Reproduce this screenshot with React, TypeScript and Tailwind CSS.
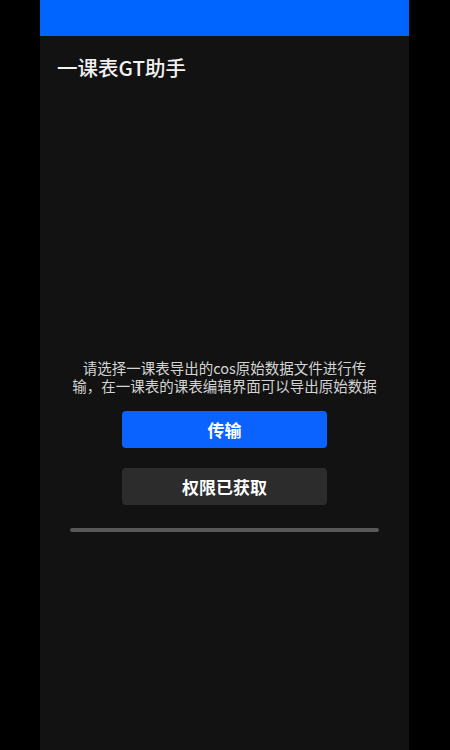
export default function App() {
  return (
    <div className="flex h-[750px] w-[450px] bg-black font-['Noto_Sans_CJK_SC','Noto_Sans',sans-serif]">
      <div className="ml-[40px] flex h-full w-[369px] flex-col bg-[#121212]">
        <div className="h-[36px] w-full bg-[#0064ff]" />
        <h1 className="pl-[17px] pt-[17px] text-[20.5px] font-medium leading-[28px] text-[#f2f2f2]">
          一课表GT助手
        </h1>

        <p className="mt-[278px] text-center text-[14.5px] leading-[18px] text-[#d4d4d4]">
          请选择一课表导出的cos原始数据文件进行传
          <br />
          输，在一课表的课表编辑界面可以导出原始数据
        </p>

        <button
          type="button"
          className="ml-[82px] mt-[16px] h-[37px] w-[205px] rounded-[4px] bg-[#0a62ff] text-[17px] font-bold text-white"
        >
          传输
        </button>
        <button
          type="button"
          className="ml-[82px] mt-[20px] h-[37px] w-[205px] rounded-[4px] bg-[#2c2c2c] text-[17px] font-bold text-white"
        >
          权限已获取
        </button>

        <div className="ml-[30px] mt-[23px] h-[4px] w-[309px] rounded-full bg-[#585858]" />
      </div>
    </div>
  );
}
